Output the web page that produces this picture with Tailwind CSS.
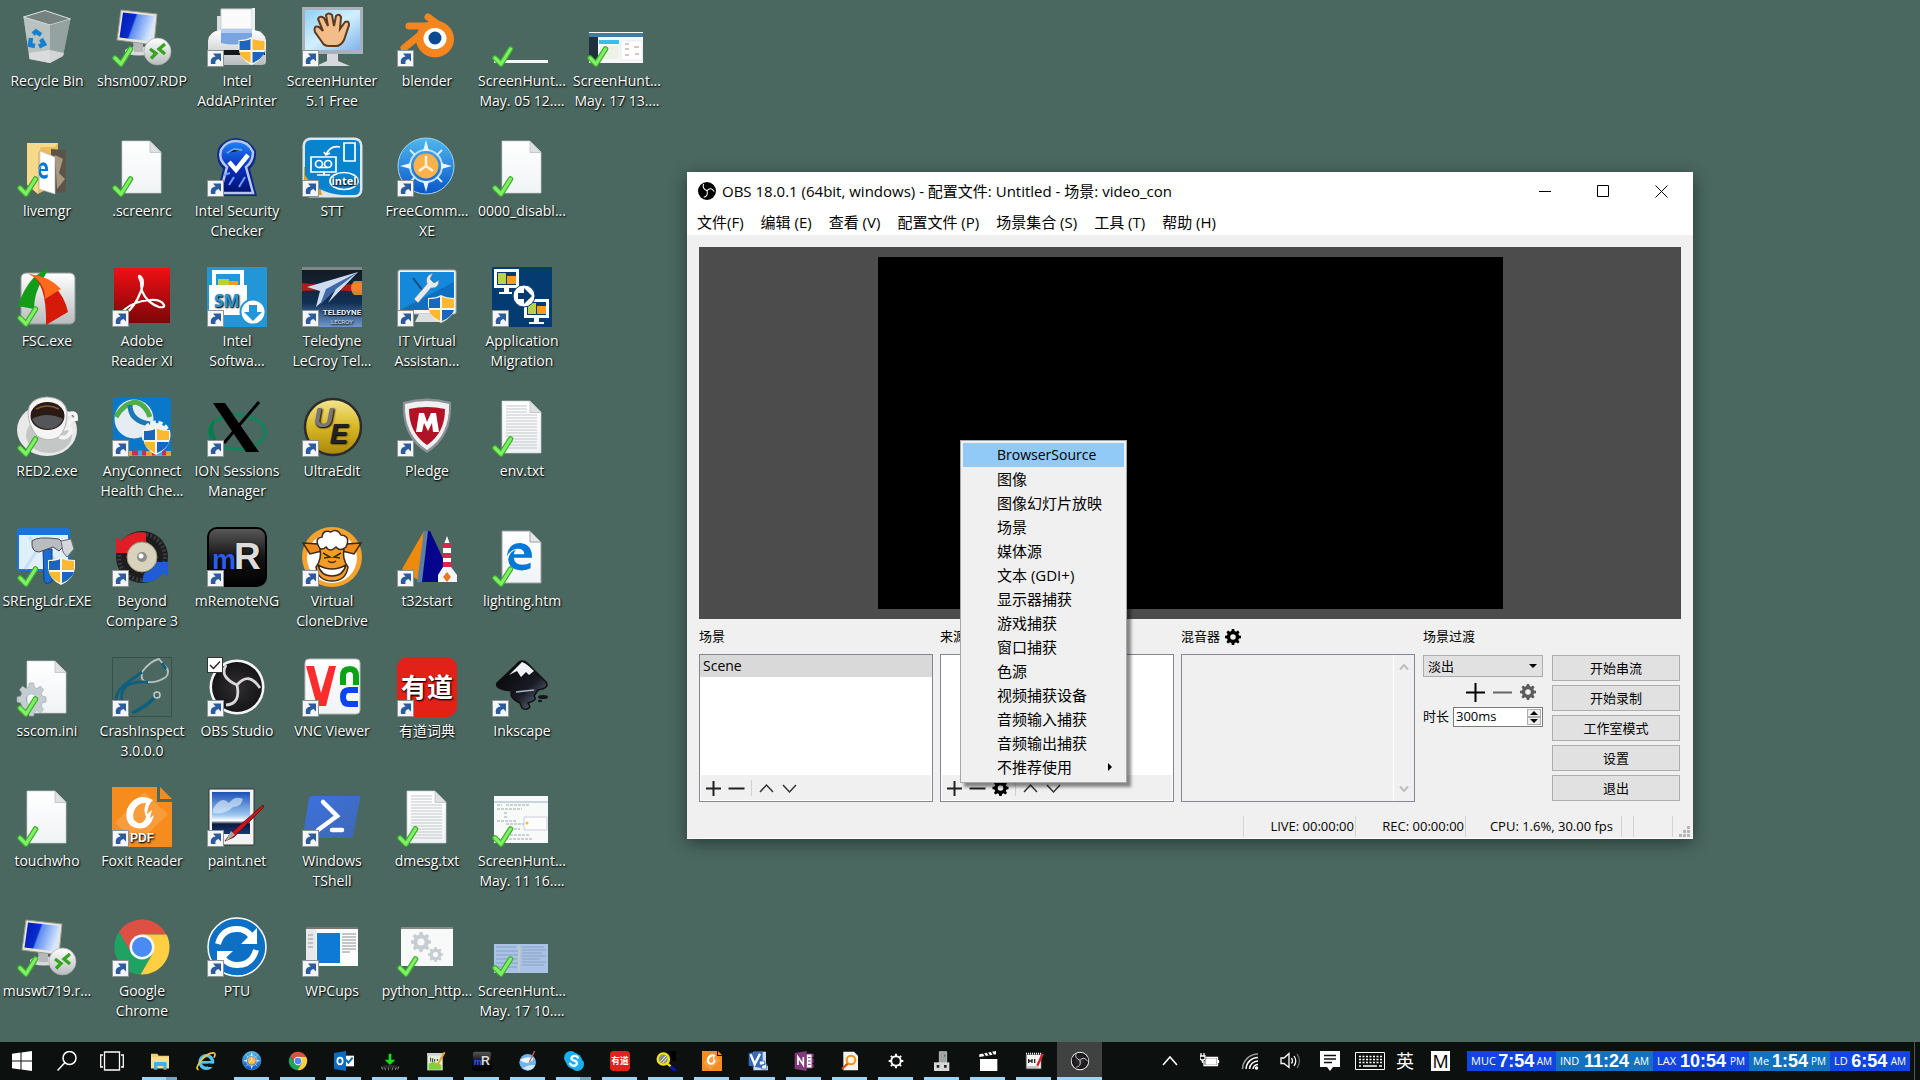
<!DOCTYPE html>
<html lang="zh-CN">
<head>
<meta charset="utf-8">
<title>Desktop</title>
<script src="https://cdn.jsdelivr.net/npm/@tailwindcss/browser@4"></script>
</head>
<body class="font-['Open_Sans','Noto_Sans_CJK_SC',sans-serif]">
<svg class="absolute w-0 h-0" aria-hidden="true">
  <defs>
    <linearGradient id="gScreen" x1="0" y1="0" x2="1" y2="0.3"><stop offset="0" stop-color="#0018b8"/><stop offset=".45" stop-color="#0a2ccc"/><stop offset=".5" stop-color="#5b8cf0"/><stop offset="1" stop-color="#d6e6ff"/></linearGradient>
    <linearGradient id="gPaper" x1="0" y1="0" x2="0" y2="1"><stop offset="0" stop-color="#ffffff"/><stop offset="1" stop-color="#f0f3f5"/></linearGradient>
    <linearGradient id="gGrey" x1="0" y1="0" x2="0" y2="1"><stop offset="0" stop-color="#ffffff"/><stop offset="1" stop-color="#b9bcbc"/></linearGradient>
    <linearGradient id="gRed" x1="0" y1="0" x2="0" y2="1"><stop offset="0" stop-color="#f01015"/><stop offset="1" stop-color="#7c0508"/></linearGradient>
    <linearGradient id="gBlue" x1="0" y1="0" x2="0" y2="1"><stop offset="0" stop-color="#4fb8ee"/><stop offset="1" stop-color="#0a55c8"/></linearGradient>
    <linearGradient id="gNavy" x1="0" y1="0" x2="0" y2="1"><stop offset="0" stop-color="#1d86f2"/><stop offset=".5" stop-color="#0a2fc0"/><stop offset="1" stop-color="#00106e"/></linearGradient>
    <linearGradient id="gBlack" x1="0" y1="0" x2="0" y2="1"><stop offset="0" stop-color="#5a5a5a"/><stop offset=".5" stop-color="#151515"/><stop offset="1" stop-color="#000"/></linearGradient>
    <linearGradient id="gGold" x1="0" y1="0" x2="0" y2="1"><stop offset="0" stop-color="#f4e690"/><stop offset=".5" stop-color="#d8b824"/><stop offset="1" stop-color="#a8860a"/></linearGradient>
    <linearGradient id="gSky" x1="0" y1="0" x2="0" y2="1"><stop offset="0" stop-color="#1c50b8"/><stop offset=".55" stop-color="#9cc8f0"/><stop offset=".68" stop-color="#ffffff"/><stop offset=".76" stop-color="#0a1a3c"/><stop offset="1" stop-color="#123a80"/></linearGradient>
    <linearGradient id="gScreen2" x1="0" y1="0" x2="1" y2="1"><stop offset="0" stop-color="#8fd0f4"/><stop offset=".5" stop-color="#d2f0fc"/><stop offset="1" stop-color="#7fb4ec"/></linearGradient>
    <linearGradient id="gSpace" x1="0" y1="0" x2="0" y2="1"><stop offset="0" stop-color="#14181c"/><stop offset=".6" stop-color="#123055"/><stop offset="1" stop-color="#6f98cc"/></linearGradient>
    <linearGradient id="gPs" x1="0" y1="0" x2="1" y2="1"><stop offset="0" stop-color="#3c72e0"/><stop offset="1" stop-color="#3f68b4"/></linearGradient>
    <linearGradient id="gInk" x1="0" y1="0" x2="1" y2="1"><stop offset="0" stop-color="#000"/><stop offset=".6" stop-color="#1a1c26"/><stop offset="1" stop-color="#7c88a4"/></linearGradient>
    <radialGradient id="gObs"><stop offset="0" stop-color="#302e31"/><stop offset="1" stop-color="#151416"/></radialGradient>
    <g id="shield"><path d="M0 3Q8 3 13 0Q18 3 27 3V11Q26 22 13 28Q1 22 0 11Z" fill="#f8f4e8"/><path d="M1 4Q8 4 12 2V13H1Z" fill="#1a66be"/><path d="M14 2Q19 4 26 4V13H14Z" fill="#fdb831"/><path d="M1 15H12V26Q2 21 1 15Z" fill="#fdb831"/><path d="M14 15H26Q24 22 14 26Z" fill="#1a66be"/></g>
    <g id="shortcut"><rect x=".5" y="43.500" width="16" height="16" fill="#f5f6f7" stroke="#8d9294"/><path d="M4 57Q2.500 50 8.500 49.500L6 46.500H14V54.500L11.500 52Q7.500 53 8.500 57Z" fill="#2c5c9e"/></g>
    <g id="tick"><path d="M3 51L9 57L18.500 42" fill="none" stroke="#3fae2c" stroke-width="5.500" stroke-linecap="round" stroke-linejoin="round"/><path d="M3 51L9 57L18.500 42" fill="none" stroke="#7ef066" stroke-width="3.200" stroke-linecap="round" stroke-linejoin="round"/></g>
    <path id="gear" fill-rule="evenodd" d="M8.500 0h3l.5 2.600 1.800.8 2.300-1.500 2.100 2.100-1.500 2.300.8 1.700 2.500.5v3l-2.500.5-.8 1.800 1.500 2.300-2.100 2.100-2.300-1.500-1.800.8-.5 2.500h-3l-.5-2.500-1.800-.8-2.300 1.500-2.100-2.100 1.500-2.300-.8-1.800L0 11.500v-3l2.500-.5.800-1.700-1.500-2.300 2.100-2.100 2.300 1.500 1.800-.8zM10 6.500a3.500 3.500 0 1 0 0 7a3.500 3.500 0 1 0 0-7z"/>
  </defs>
</svg>

<div class="flex flex-col h-screen min-h-[1080px] bg-[#4a6860] overflow-hidden">
  <main class="relative grow">
    <ul id="icons" class="grid grid-flow-col grid-rows-[repeat(8,130px)] auto-cols-[95px] w-max"></ul>

    <!-- OBS window, placed freely on the desktop -->
    <section class="absolute left-[687px] top-[172px] w-[1006px] flex flex-col bg-[#f0f0f0] text-black shadow-[0_4px_16px_rgba(0,0,0,.45)] border-b border-white">
      <header class="flex items-center h-[38px] pl-[11px] pr-[3px] bg-white text-[15px]">
        <svg class="size-[18px] mr-1.5" viewBox="0 0 60 60"><circle cx="30" cy="30" r="30" fill="#000"/><g fill="none" stroke="#fff" stroke-width="3.500"><path d="M30 29Q12 20 19 7M30 29Q44 14 54 32M30 29Q35 49 19 51"/></g></svg>
        <h1 class="grow whitespace-nowrap">OBS 18.0.1 (64bit, windows) - 配置文件: Untitled - 场景: video_con</h1>
        <button aria-label="Minimize" class="grid place-items-center w-[58px] h-full"><svg class="size-3" viewBox="0 0 12 12"><path d="M0 6.500H12" stroke="#000"/></svg></button>
        <button aria-label="Maximize" class="grid place-items-center w-[58px] h-full"><svg class="size-3" viewBox="0 0 12 12"><path d="M.5.500H11.500V11.500H.5Z" stroke="#000" fill="none"/></svg></button>
        <button aria-label="Close" class="grid place-items-center w-[58px] h-full"><svg class="size-[13px]" viewBox="0 0 13 13"><path d="M.5.500L12.500 12.500M12.500.500L.5 12.500" stroke="#000"/></svg></button>
      </header>
      <nav class="flex items-center gap-[17px] h-[25px] pl-2.5 bg-white text-[15px] whitespace-nowrap">
        <button>文件(F)</button><button>编辑 (E)</button><button>查看 (V)</button><button>配置文件 (P)</button><button>场景集合 (S)</button><button>工具 (T)</button><button>帮助 (H)</button>
      </nav>
      <div class="px-3 pt-3">
        <div class="flex justify-center pt-2.5 h-[372px] bg-[#4c4c4c]"><div class="w-[625px] h-[352px] bg-black"></div></div>
      </div>
      <div class="flex h-[183px] pl-3 pr-[13px] text-[13px]">
        <section class="w-[234px] mr-[7px]">
          <h2 class="flex items-center h-[35px]">场景</h2>
          <div class="flex flex-col h-[148px] border border-[#828790] bg-white">
            <div class="flex items-center h-[22px] pl-[3px] bg-[#d9d9d9] text-sm">Scene</div>
            <div class="grow"></div>
            <div class="flex items-center gap-1 h-[25px] mx-px mb-px pl-[3px] bg-[#f0f0f0]">
              <button aria-label="Add scene"><svg class="w-[19px] h-4" viewBox="0 0 19 16"><path d="M2 8.500H17M9.500 1V16" stroke="#222" stroke-width="2"/></svg></button>
              <button aria-label="Remove scene"><svg class="w-[19px] h-4" viewBox="0 0 19 16"><path d="M1.500 8.500H17.500" stroke="#222" stroke-width="2"/></svg></button>
              <span class="w-px h-4 mx-px bg-[#cfcfcf]"></span>
              <button aria-label="Move up"><svg class="w-[19px] h-4" viewBox="0 0 19 16"><path d="M3 12L9.500 5L16 12" fill="none" stroke="#333" stroke-width="1.500"/></svg></button>
              <button aria-label="Move down"><svg class="w-[19px] h-4" viewBox="0 0 19 16"><path d="M3 5L9.500 12L16 5" fill="none" stroke="#333" stroke-width="1.500"/></svg></button>
            </div>
          </div>
        </section>
        <section class="w-[234px] mr-[7px]">
          <h2 class="flex items-center h-[35px]">来源</h2>
          <div class="flex flex-col h-[148px] border border-[#828790] bg-white">
            <div class="grow"></div>
            <div class="flex items-center gap-1 h-[25px] mx-px mb-px pl-[3px] bg-[#f0f0f0]">
              <button aria-label="Add source"><svg class="w-[19px] h-4" viewBox="0 0 19 16"><path d="M2 8.500H17M9.500 1V16" stroke="#222" stroke-width="2"/></svg></button>
              <button aria-label="Remove source"><svg class="w-[19px] h-4" viewBox="0 0 19 16"><path d="M1.500 8.500H17.500" stroke="#222" stroke-width="2"/></svg></button>
              <button aria-label="Source properties"><svg class="w-[19px] h-4" viewBox="0 0 20 20"><use href="#gear"/></svg></button>
              <span class="w-px h-4 mx-px bg-[#cfcfcf]"></span>
              <button aria-label="Move up"><svg class="w-[19px] h-4" viewBox="0 0 19 16"><path d="M3 12L9.500 5L16 12" fill="none" stroke="#333" stroke-width="1.500"/></svg></button>
              <button aria-label="Move down"><svg class="w-[19px] h-4" viewBox="0 0 19 16"><path d="M3 5L9.500 12L16 5" fill="none" stroke="#333" stroke-width="1.500"/></svg></button>
            </div>
          </div>
        </section>
        <section class="w-[234px] mr-2">
          <h2 class="flex items-center gap-[5px] h-[35px]">混音器 <svg class="size-4" viewBox="0 0 20 20"><use href="#gear"/></svg></h2>
          <div class="flex justify-end h-[148px] border border-[#828790]">
            <div class="flex flex-col items-center justify-between w-[21px] py-2 border-l border-white">
              <svg class="w-2.5 h-2" viewBox="0 0 10 8"><path d="M1 6.500L5 2L9 6.500" fill="none" stroke="#bfbfbf" stroke-width="2"/></svg>
              <svg class="w-2.5 h-2" viewBox="0 0 10 8"><path d="M1 1.500L5 6L9 1.500" fill="none" stroke="#bfbfbf" stroke-width="2"/></svg>
            </div>
          </div>
        </section>
        <section class="w-[120px] mr-[9px]">
          <h2 class="flex items-center h-[36px]">场景过渡</h2>
          <div class="relative h-[22px]">
            <select aria-label="场景过渡" class="appearance-none block w-full h-full pl-1 border border-[#adadad] bg-[#e1e1e1] leading-none"><option>淡出</option></select>
            <svg class="absolute right-1.5 top-[9px] w-2 h-1" viewBox="0 0 8 4"><path d="M0 0H8L4 4Z"/></svg>
          </div>
          <div class="flex items-center justify-end gap-2 h-[30px] pr-[7px]">
            <button aria-label="Add transition"><svg class="size-[19px]" viewBox="0 0 19 19"><path d="M0 9.500H19M9.500 0V19" stroke="#000" stroke-width="2"/></svg></button>
            <button aria-label="Remove transition"><svg class="size-[19px]" viewBox="0 0 19 19"><path d="M0 9.500H19" stroke="#666" stroke-width="2"/></svg></button>
            <button aria-label="Transition properties"><svg class="size-4" viewBox="0 0 20 20" fill="#5c5c5c"><use href="#gear"/></svg></button>
          </div>
          <div class="flex items-center h-5">
            <label for="dur" class="w-[30px]">时长</label>
            <div class="flex w-[90px] h-5 border border-[#7a7a7a] bg-white p-px">
              <input id="dur" value="300ms" class="w-0 grow pl-px outline-none">
              <div class="flex flex-col w-3.5">
                <button aria-label="Increase" class="grid place-items-center h-2 border border-[#adadad] bg-[#eee]"><svg class="w-2 h-1" viewBox="0 0 8 4"><path d="M0 4H8L4 0Z"/></svg></button>
                <button aria-label="Decrease" class="grid place-items-center h-2 border border-[#adadad] bg-[#eee]"><svg class="w-2 h-1" viewBox="0 0 8 4"><path d="M0 0H8L4 4Z"/></svg></button>
              </div>
            </div>
          </div>
        </section>
        <div class="flex flex-col gap-1 grow pt-9">
          <button class="h-[26px] border border-[#adadad] bg-[#e1e1e1] leading-none">开始串流</button>
          <button class="h-[26px] border border-[#adadad] bg-[#e1e1e1] leading-none">开始录制</button>
          <button class="h-[26px] border border-[#adadad] bg-[#e1e1e1] leading-none">工作室模式</button>
          <button class="h-[26px] border border-[#adadad] bg-[#e1e1e1] leading-none">设置</button>
          <button class="h-[26px] border border-[#adadad] bg-[#e1e1e1] leading-none">退出</button>
        </div>
      </div>
      <footer class="flex justify-end items-end h-9 pr-[3px] pb-px text-[13px] whitespace-nowrap">
        <div class="flex justify-end items-center w-[113px] h-[21px] border-x border-[#d4d4d4] pr-px">LIVE: 00:00:00</div>
        <div class="flex justify-end items-center w-[110px] h-[21px] border-r border-[#d4d4d4] pr-px">REC: 00:00:00</div>
        <div class="flex justify-end items-center w-[156px] h-[21px] border-r border-[#d4d4d4] pr-2">CPU: 1.6%, 30.00 fps</div>
        <div class="w-3 h-[21px] border-r border-[#d4d4d4]"></div>
        <div class="w-[39px] h-[21px] border-r border-[#d4d4d4] mr-1.5"></div>
        <svg class="size-[11px]" viewBox="0 0 11 11" fill="#b5b5b5"><path d="M8 0h3v3h-3zM4 4h3v3h-3zM8 4h3v3h-3zM0 8h3v3h-3zM4 8h3v3h-3zM8 8h3v3h-3z"/></svg>
      </footer>
    </section>

    <!-- Add-source menu -->
    <menu class="absolute left-[960px] top-[440px] w-[167px] px-0.5 pt-0.5 pb-[3px] bg-[#f0f0f0] border border-[#a8a8a8] shadow-[4px_4px_3px_rgba(0,0,0,.45)] text-[15px] leading-[22px] text-black [&_button]:block [&_button]:w-full [&_button]:h-6 [&_button]:pl-[34px] [&_button]:text-left whitespace-nowrap">
      <li><button class="bg-[#91c9f7] text-sm">BrowserSource</button></li>
      <li><button>图像</button></li>
      <li><button>图像幻灯片放映</button></li>
      <li><button>场景</button></li>
      <li><button>媒体源</button></li>
      <li><button>文本 (GDI+)</button></li>
      <li><button>显示器捕获</button></li>
      <li><button>游戏捕获</button></li>
      <li><button>窗口捕获</button></li>
      <li><button>色源</button></li>
      <li><button>视频捕获设备</button></li>
      <li><button>音频输入捕获</button></li>
      <li><button>音频输出捕获</button></li>
      <li class="relative"><button>不推荐使用</button><svg class="absolute right-3 top-2 w-1 h-2" viewBox="0 0 4 8"><path d="M0 0L4 4L0 8Z"/></svg></li>
    </menu>
  </main>

  <footer class="flex items-stretch h-[38px] bg-[#0c100f] text-white">
    <button aria-label="Start" class="grid place-items-center w-11"><svg class="size-5" viewBox="0 0 20 20" fill="#fff"><path d="M0 2.800L8.500 1.600V9.500H0ZM9.500 1.400L20 0V9.500H9.500ZM0 10.500H8.500V18.400L0 17.200ZM9.500 10.500H20V20L9.500 18.600Z"/></svg></button>
    <button aria-label="Search" class="grid place-items-center w-[45px]"><svg class="size-5" viewBox="0 0 20 20" fill="none" stroke="#fff" stroke-width="1.500"><circle cx="12.500" cy="7" r="6.500"/><path d="M8 11.500L0.500 19.500"/></svg></button>
    <button aria-label="Task view" class="grid place-items-center w-[45px] mr-[3px]"><svg class="w-6 h-5" viewBox="0 0 24 20" fill="none" stroke="#fff" stroke-width="1.300"><path d="M4.500 1H19.500V19H4.500ZM3 4H.7V16H3M21 4H23.300V16H21"/></svg></button>
    <div id="tasks" class="flex gap-px grow"></div>
    <div class="flex items-center">
      <button aria-label="Hidden icons" class="grid place-items-center w-10 h-full"><svg class="w-4 h-5" viewBox="0 0 16 20"><path d="M1 14L8 6L15 14" fill="none" stroke="#fff" stroke-width="1.500"/></svg></button>
      <button aria-label="Power" class="grid place-items-center w-10 h-full"><svg class="w-5 h-5" viewBox="0 0 20 20" fill="none" stroke="#fff" stroke-width="1.300"><path d="M6 6.500H17.500V14.500H4V10M18.500 9V12"/><path d="M7 8H16V13H6V9Z" fill="#fff"/><path d="M1 2V5M4 2V5M0 5H5V8L3.500 9H1.500L0 8ZM2.500 9V12"/></svg></button>
      <button aria-label="Network" class="grid place-items-center w-10 h-full"><svg class="w-5 h-5" viewBox="0 0 20 20" fill="none" stroke="#fff" stroke-width="1.500"><path d="M2.500 18A15.500 15.500 0 0 1 18 3" stroke="#999"/><path d="M6 18A12 12 0 0 1 18 6.500M9.500 18A8.500 8.500 0 0 1 18 10M13 18A5 5 0 0 1 18 13.500"/><circle cx="16.500" cy="17" r="1" fill="#fff"/></svg></button>
      <button aria-label="Volume" class="grid place-items-center w-10 h-full"><svg class="w-[22px] h-5" viewBox="0 0 22 20" fill="none" stroke="#fff" stroke-width="1.300"><path d="M2 7H5L10 2.500V16.500L5 12.500H2Z"/><path d="M12.500 7Q14.500 10 12.500 12.500M15 5Q18.500 10 15 15"/><path d="M18 3Q23 10 18 17" stroke="#666"/></svg></button>
      <button aria-label="Notifications" class="grid place-items-center w-10 h-full"><svg class="w-5 h-5" viewBox="0 0 20 20"><path d="M0 0H20V16H13L10 20L7 16H0Z" fill="#fff"/><path d="M4 4.500H16M4 8H16M4 11.500H12" stroke="#0c100f" stroke-width="1.300"/></svg></button>
      <button aria-label="Touch keyboard" class="grid place-items-center w-10 h-full"><svg class="w-[30px] h-[18px]" viewBox="0 0 30 18" fill="none" stroke="#fff"><path d="M.5.500H29.500V17.500H.5Z"/><path d="M4 4.500H27M4 7.500H27M4 10.500H27" stroke-dasharray="2 1.500" stroke-width="1.500"/><path d="M4 14H6M8 14H22M24 14H27" stroke-width="1.500"/></svg></button>
      <button class="w-[30px] text-lg leading-none text-center">英</button>
      <button aria-label="Input mode" class="grid place-items-center w-[19px] h-5 ml-[11px] mr-[17px] bg-white text-black text-lg leading-none"><span>M</span></button>
      <div id="clocks" class="flex h-5 mr-1 leading-5 whitespace-nowrap"></div>
      <button aria-label="Show desktop" class="w-1.5 h-full border-l border-[#555]"></button>
    </div>
  </footer>
</div>

<script>
const paper = '<path d="M10 4H38L49 15V56H10Z" fill="url(#gPaper)" stroke="#c9cdcf" stroke-width=".7"/><path d="M38 4V15.500H49Z" fill="#dfe1e2" stroke="#b4b8ba" stroke-width=".7"/>';
const lines = '<path d="M14 9H35M14 12H35M14 15H35M14 18H45M14 21H45M14 24H45M14 27H45M14 30H45M14 33H45M14 36H45M14 39H45M14 42H45M14 45H45M14 48H45M14 51H45" stroke="#c3c7c9"/>';
const edge = '<path d="M4 22Q6 3 23 3Q40 4 40 24H14Q15 34 26 34Q33 34 38 31V39Q33 42 25 42Q7 41 6 26Q8 15 17 12Q14 16 14 19H29Q29 11 20 11Q10 11 4 22Z" fill="#0078d7"/>';
const shieldAt = (x, y) => `<use href="#shield" x="${x}" y="${y}"/>`;

const art = {
  bin: '<path d="M6.500 10L28 3.500L53.500 12L46 49L33 56L12.500 52Z" fill="#a9b4b3" opacity=".85"/><path d="M6.500 10L28 3.500L53.500 12L33 18Z" fill="#75827f" stroke="#dfe4e4"/><path d="M6.500 10L33 18V56L12.500 52Z" fill="#c3cccb" opacity=".75"/><path d="M33 18L53.500 12L46 49L33 56Z" fill="#94a19f" opacity=".8"/><path d="M12 46L33 43L47 46L46 49L33 56L12.500 52Z" fill="#e4e0e4" opacity=".8"/><g fill="none" stroke="#1580cf" stroke-width="4.500"><path d="M16 27L19 24.500L24 28"/><path d="M14 31L13 38L18 39"/><path d="M22 39.500L27 37L24 32"/></g>',
  rdp: '<ellipse cx="27" cy="44" rx="14" ry="4.500" fill="#d9dadb"/><path d="M21 34L31 35V45H22Z" fill="#b6b8ba"/><path d="M9 3L45 7L42 38L5 33Z" fill="#e8e6da" stroke="#9a9a94"/><path d="M11 5.500L42.500 9L39.500 34.500L7.500 30.500Z" fill="url(#gScreen)"/><circle cx="45.500" cy="44.500" r="13.500" fill="url(#gGrey)" stroke="#aaa" stroke-width=".7"/><path d="M38 42L44 46.500L39 51.500M53 37L47 42L53 47" fill="none" stroke="#36a51e" stroke-width="3.300"/>',
  printer: '<path d="M10 9H48V26H10Z" fill="#d9dde0"/><path d="M14 2H45V22H14Z" fill="#fafafa" stroke="#cfd2d4"/><path d="M45 1H48V26H45Z" fill="#eceff0"/><path d="M1 34Q2 24 14 23H46Q58 24 59 34V55Q59 58 54 58H8Q1 58 1 54Z" fill="url(#gGrey)"/><path d="M14 22H45V34Q30 40 14 36Z" fill="#78a5e2"/><path d="M14 22H45V26H14Z" fill="#b4cdf2"/><path d="M2 43H58V48H2Z" fill="#15181a"/>' + shieldAt(31.5, 30),
  hunter: '<path d="M0 0H61V47H0Z" fill="#a9b1bb"/><path d="M3 3H58V43H3Z" fill="url(#gScreen2)"/><path d="M25 47H36V54L48 59H14L25 54Z" fill="#d5d8dc"/><path d="M20 35L13 25Q11 18 17 20L21 24L16 12Q18 8 22 11L26 19L24 8Q27 5 30 8L32 19L34 9Q37 6 39 10L38 22L43 15Q47 13 47 18L42 33Q39 39 34 39H27Q22 39 20 35Z" fill="#f3bd8a" stroke="#5a3a20" stroke-width="2"/>',
  blender: '<g stroke="#f5861f" stroke-width="7" stroke-linecap="round" fill="none"><path d="M31 10L50 24M12 19H36M7 41L28 24"/></g><ellipse cx="38" cy="32" rx="19" ry="18.500" fill="#f5861f"/><ellipse cx="38" cy="31.500" rx="11.500" ry="10.500" fill="#fff"/><circle cx="38" cy="31" r="6.500" fill="#0c4a94"/>',
  thin: '<path d="M2 53H56V56H2Z" fill="#f4f5f5"/>',
  shot1: '<path d="M2 25H56V56H2Z" fill="#f6f8fa"/><path d="M2 26H56V30H2Z" fill="#3d7ea6"/><path d="M2 30H11V54H2Z" fill="#20303c"/><path d="M12 33H32V37H12Z" fill="#35bfee"/><path d="M13 39H32V52H13Z" fill="#eef2e6"/><path d="M34 34H55V53H34Z" fill="#fff" stroke="#dde" stroke-width=".6"/><path d="M38 37H42M38 42H42M47 40H52M38 48H42M48 47H52" stroke="#b88"/>',
  folder: '<path d="M10 6H41V14L38 48L21 57L10 48Z" fill="#e9bd5c"/><path d="M34 12L49 13V55L34 56Z" fill="#5c5448"/><path d="M38 18L46 22L42 36L48 42L40 52Z" fill="#a89880"/><path d="M23 14L38 20V57L22 52Z" fill="#fff" stroke="#bbb" stroke-width=".7"/><g transform="translate(20 24) scale(.28 .42)">' + edge + '</g><path d="M10 6L41 6L38 10H24L21 17V57L10 47Z" fill="#f7d98b"/>',
  page: paper,
  text: paper + lines,
  keyhole: '<path d="M29 1Q43 2 49 14Q50 25 43 32L50 59H9L16 32Q8 24 11 12Q16 2 29 1Z" fill="#0a2a8c"/><path d="M29 4Q41 4 46 15Q46 25 39 30L46 56H13L20 30Q11 23 14 13Q19 4 29 4Z" fill="url(#gNavy)" stroke="#b9c5e8" stroke-width="2.500"/><path d="M20 16L27 12L35 13M17 38L23 36M22 48L27 40M32 50L38 40" stroke="#6aa0ff" stroke-width="2"/><path d="M22 25L29 33L41 18" stroke="#fff" stroke-width="4.500" fill="none"/>',
  stt: '<rect x=".5" y=".5" width="60" height="60" rx="8" fill="#dfe6ea"/><path d="M2 30H14L20 58H2Z" fill="#e0a020"/><path d="M3 9Q3 3 9 3H52Q58 3 58 9V52Q58 58 52 58H40Q14 56 3 38Z" fill="#0a83cf"/><g fill="none" stroke="#fff" stroke-width="1.700"><path d="M9 20H34V35H9ZM15 38H28M22 35V38"/><circle cx="17" cy="27" r="3.500"/><circle cx="26" cy="27" r="3.500"/><path d="M17 30.500H26M24 18Q28 8 38 10M22 15L24 18L28 16"/><path d="M42 6H53V24H42Z"/><ellipse cx="42" cy="44" rx="14" ry="8.500"/></g><text x="42" y="48" text-anchor="middle" font-size="11" font-weight="bold" fill="#fff" font-family="Open Sans">intel</text>',
  compass: '<circle cx="29" cy="29" r="28" fill="url(#gBlue)" stroke="#9fd4f4"/><circle cx="29" cy="29" r="16" fill="none" stroke="#b9e0f6" stroke-width="2"/><path d="M29 3L32 14H26ZM29 55L32 44H26ZM3 29L14 26V32ZM55 29L44 26V32Z" fill="#e6f5fd"/><path d="M13 13L18 18M45 13L40 18M13 45L18 40M45 45L40 40" stroke="#d4edfa" stroke-width="2"/><circle cx="29" cy="29" r="12.500" fill="#fcb14a"/><path d="M29 19V29L22 34M29 29L36 34" stroke="#fff3dc" stroke-width="2.500" fill="none"/>',
  fsc: '<rect x="4" y="6" width="54" height="51" rx="5" fill="url(#gGrey)" stroke="#909896"/><path d="M32 1L18 9Q6 22 1 39L17 42Q17 26 26 12Z" fill="#139c17"/><path d="M12 7Q30 14 29 58L51 45Q44 14 12 7Z" fill="#d61a0a"/><path d="M12 7Q28 15 28 32L44 22Q32 9 12 7Z" fill="#ff6a1c"/>',
  adobe: '<path d="M2 1H58V56H2Z" fill="url(#gRed)"/><path d="M29 15Q25 6 29 10Q33 14 29 24Q23 40 14 46Q7 49 12 43Q22 34 38 33Q49 32 52 38Q53 41 47 40Q35 36 30 24Q29 19 29 15" fill="none" stroke="#fff" stroke-width="2.200"/>',
  sm: '<path d="M0 0H60V60H0Z" fill="#2296d6"/><path d="M5 3H37V20H33V7H9V20H5Z" fill="#fff"/><path d="M11 12H22V19H11Z" fill="#b8cf45"/><path d="M22 14H31V19H22Z" fill="#f59c1a"/><path d="M2 18H40V48H2Z" fill="#fff"/><text x="20" y="40" text-anchor="middle" font-size="17" font-weight="bold" fill="#2296d6" font-family="Open Sans">SM</text><circle cx="46" cy="45" r="12.500" fill="#fff" stroke="#2296d6" stroke-width="2"/><path d="M42 38H50V45H55L46 54L37 45H42Z" fill="#2296d6"/>',
  teledyne: '<path d="M0 0H60V60H0Z" fill="url(#gSpace)"/><path d="M0 0H60V3H0Z" fill="#80888c"/><path d="M0 16Q30 20 60 16V25Q30 22 0 24Z" fill="#c22014" opacity=".85"/><path d="M52 14H60V28H52Q46 21 52 14Z" fill="#ff9c30" opacity=".8"/><path d="M56 5L5 20L18 24L14 40L34 22L26 36Z" fill="#cfdcf0"/><path d="M56 5L24 22L18 38L34 22Z" fill="#3f68a8"/><text x="40" y="48" text-anchor="middle" font-size="8" font-weight="bold" fill="#e8edf4" font-family="Roboto">TELEDYNE</text><text x="40" y="57" text-anchor="middle" font-size="6" fill="#d9e4f0" font-family="Roboto">LECROY</text>',
  itva: '<rect x="1" y="3" width="58" height="44" rx="2" fill="#f4f6f7" stroke="#aab"/><path d="M3 5H57V43H3Z" fill="#1489dc"/><path d="M3 43L57 15V43Z" fill="#0c6fc0"/><path d="M22 47H40L43 55H18Z" fill="#dcdfdf"/><path d="M16 11L26 24" stroke="#174a78" stroke-width="2"/><path d="M17 32L30 17Q27 9 36 6L33 12L37 16L42 13Q42 22 34 21L21 36Z" fill="#e5ebf0" stroke="#5d7a92" stroke-width=".7"/>' + shieldAt(31, 28),
  appmig: '<path d="M0 0H60V60H0Z" fill="#043c72"/><g><path d="M2 2H27V21H17V25H20V27H7V25H12V21H2Z" fill="#fff"/><path d="M5 5H24V18H5Z" fill="#043c72"/><path d="M6 6H14V17H6Z" fill="#b8d24a"/><path d="M15 9H24V17H15Z" fill="#f79f1c"/></g><g><path d="M32 32H57V51H47V55H52V57H37V55H42V51H32Z" fill="#fff"/><path d="M35 35H54V48H35Z" fill="#043c72"/><path d="M36 36H44V47H36Z" fill="#b8d24a"/><path d="M45 39H54V47H45Z" fill="#f79f1c"/></g><circle cx="32" cy="29" r="11" fill="#fff" stroke="#043c72"/><path d="M26 26H32V21L40 29L32 37V32H26Z" fill="#043c72"/>',
  coffee: '<ellipse cx="30" cy="33" rx="30" ry="26" fill="#e8e9e8"/><ellipse cx="32" cy="38" rx="23" ry="18" fill="#c5c7c6"/><path d="M46 19Q60 12 59 22Q52 22 51 29M44 33Q56 28 53 36Q48 44 40 38" fill="none" stroke="#f4f4f4" stroke-width="4"/><path d="M11 15Q12 1 30 0Q48 1 50 15Q50 32 42 40Q30 46 20 39Q11 28 11 15Z" fill="#f5f5f5" stroke="#b5b5b5"/><ellipse cx="30.500" cy="19" rx="17" ry="14" fill="#2a1a14"/><path d="M15 22Q30 14 46 22Q42 32 30 32Q19 31 15 22Z" fill="#55565a"/><path d="M19 12Q30 6 42 12" stroke="#8a5830" stroke-width="1.500" fill="none"/>',
  anyconnect: '<rect x="1" y="1" width="58" height="58" rx="2" fill="#0a78c8"/><path d="M17 54H59V59H17Z" fill="#f0a020"/><path d="M20 56H26M30 56H34M40 56H44M50 56H54" stroke="#d02a5a" stroke-width="5"/><path d="M26 56H30M44 56H50" stroke="#30b0e0" stroke-width="5"/><circle cx="22" cy="22" r="19.500" fill="#e6edf2"/><path d="M4 20Q12 6 24 5Q34 8 38 20" fill="none" stroke="#4fae4a" stroke-width="5"/><path d="M18 8Q18 24 38 27" fill="none" stroke="#1c78b4" stroke-width="5"/><circle cx="44" cy="38" r="12" fill="#eef3f6" stroke="#eef3f6" stroke-width="5" stroke-dasharray="4 2.500"/>' + shieldAt(31, 30),
  xming: '<ellipse cx="30" cy="35" rx="28" ry="17" fill="none" stroke="#10845a" stroke-width="3"/><path d="M4 42Q-2 30 8 22Q4 32 10 44Z" fill="#0c7a50"/><path d="M6 6H18L52 55H39Z"/><path d="M52 5L17 46" stroke="#000" stroke-width="3"/>',
  ultraedit: '<circle cx="31" cy="30" r="28" fill="url(#gGold)" stroke="#2c2c2c" stroke-width="2.500"/><text x="12" y="30" font-size="27" font-weight="bold" font-style="italic" fill="#77787c" font-family="Liberation Sans">U</text><text x="28" y="46" font-size="27" font-weight="bold" font-style="italic" fill="#222" font-family="Liberation Sans">E</text>',
  mcafee: '<path d="M6 5Q30 -2 54 5Q56 40 30 56Q4 40 6 5Z" fill="#8d9296"/><path d="M8 7Q30 1 52 7Q53 38 30 53Q7 38 8 7Z" fill="#eef0f1"/><path d="M12 12Q30 8 48 12Q48 36 30 48Q12 36 12 12Z" fill="#b01226"/><path d="M19 35L22 16H27L30 25L34 16H39L42 35H36L35 26L31 34L27 26L25 35Z" fill="#fff"/>',
  sreng: '<rect x="0" y="1" width="53" height="43" rx="3" fill="#1674dc"/><path d="M2 8H51V42H2Z" fill="#dff0fa"/><path d="M8 42L22 20L12 10M22 20L40 34" stroke="#c5dff0" stroke-width="3" fill="none"/><path d="M26 22H35V54Q30 59 27 54Z" fill="#1c6cd0" stroke="#0b3f86"/><path d="M15 14Q20 9 42 12L48 18L42 24L36 20L22 25Q14 25 15 14Z" fill="#b9bcc0" stroke="#4a4c50"/><path d="M44 14L54 12L57 22L50 30L46 25Z" fill="#d4d6d9" stroke="#6a6c70"/>' + shieldAt(31, 30),
  beyond: '<circle cx="30" cy="30" r="26" fill="#1d1d1d"/><circle cx="30" cy="30" r="23" fill="none" stroke="#3c3c3c" stroke-width="4" stroke-dasharray="2 2"/><path d="M4 26V10L9 14Q20 3 34 6V15Q24 15 18 22L20 26Z" fill="#e01e26"/><path d="M56 35V50L51 46Q42 57 30 55L32 46Q38 44 42 40L40 35Z" fill="#1f5cd6"/><circle cx="30" cy="30" r="15" fill="#d9d2bc" stroke="#9c957e"/><circle cx="30" cy="30" r="5" fill="#8c8c88"/><circle cx="29" cy="29" r="2.500" fill="#fff"/>',
  mremote: '<rect x="1" y="1" width="58" height="58" rx="9" fill="url(#gBlack)" stroke="#000" stroke-width="2"/><text x="5" y="42" font-size="27" font-weight="bold" fill="#2b5cf0" font-family="Liberation Sans">m</text><text x="27" y="42" font-size="37" font-weight="bold" fill="#dcdcdc" font-family="Liberation Sans">R</text>',
  sheep: '<circle cx="30" cy="30" r="30" fill="#f7a22c"/><circle cx="30" cy="31" r="25" fill="#fff"/><path d="M1 16L16 17L20 24L8 27ZM59 16L44 17L40 24L52 27Z" fill="#f08c1e" stroke="#3b2a1a" stroke-width="1.500"/><path d="M18 22Q30 16 42 22Q40 32 46 40Q44 54 30 54Q16 54 14 40Q20 32 18 22Z" fill="#f49b28" stroke="#3b2a1a" stroke-width="1.500"/><path d="M17 20Q12 11 20 10Q21 2 29 5Q35 1 39 8Q49 9 44 20Q38 25 34 20Q28 26 24 20Q19 24 17 20Z" fill="#fff" stroke="#3b2a1a" stroke-width="1.500"/><path d="M21 26L28 30L22 31M39 26L32 30L38 31M26 34Q30 37 34 34" stroke="#3b2a1a" stroke-width="1.500" fill="none"/><path d="M16 38Q30 46 44 38Q41 49 30 49Q19 49 16 38Z" fill="#fff" stroke="#3b2a1a" stroke-width="1.500"/>',
  t32: '<path d="M27 4L5 42L22 54Z" fill="#f08a0c"/><path d="M29 4H33L50 40V55H22Z" fill="#04048c"/><path d="M27 4H31L25 55H20Z" fill="#5c80a4"/><path d="M50 9L54 20V44H46V20Z" fill="#fff"/><path d="M46 16H54V21H46ZM46 26H54V31H46ZM46 35H54V40H46Z" fill="#e0244c"/><path d="M46 40L41 48V55H60V48L54 40Z" fill="#f2f4fa"/><path d="M50 45L54 50L50 55L46 50Z" fill="#e87820"/>',
  edgefile: '<path d="M10 4H38L49 15V56H10Z" fill="url(#gPaper)" stroke="#9aa0a2"/><path d="M38 4V15H49Z" fill="#e4e6e7" stroke="#9aa0a2"/><g transform="translate(12 14) scale(.7)">' + edge + '</g>',
  ini: paper + '<g transform="translate(0 26) scale(1.450 1.650)" fill="#c3cdd2" stroke="#9aa5aa" stroke-width=".4"><use href="#gear"/></g>',
  steth: '<path d="M.5.500H59.500V59.500H.5Z" fill="none" stroke="#37514a"/><path d="M30 15Q28 25 36 25Q45 26 54 20Q59 14 52 8L47 2Q38 4 30 15Z" fill="none" stroke="#b9bec0" stroke-width="1.800"/><path d="M30 15L12 28Q3 36 4 46M36 25Q22 24 14 29Q8 36 10 43M54 12L50 6" fill="none" stroke="#0e5f7e" stroke-width="2.800"/><path d="M44 39Q34 50 20 56" stroke="#0e5f7e" stroke-width="3.500" fill="none"/><circle cx="45" cy="38" r="3" fill="none" stroke="#c5cacb" stroke-width="1.500"/>',
  obs: '<circle cx="30" cy="30" r="27.500" fill="#f6f6f6"/><circle cx="30" cy="30" r="25" fill="url(#gObs)"/><g fill="none" stroke="#d9d7d9" stroke-width="2.800"><path d="M30 28Q12 20 19 8M30 28Q42 14 53 31M30 28Q34 47 19 48"/></g>',
  vnc: '<rect x="3" y="2" width="55" height="55" rx="4" fill="url(#gPaper)" stroke="#b9bcbe"/><path d="M4 9H12L19 36L27 9H34L24 49H15Z" fill="#fb2c2c"/><path d="M41 28V19Q41 12 48 12Q54 12 54 19V28" fill="none" stroke="#0aa312" stroke-width="6"/><path d="M56 33H47Q41 33 41 40Q41 47 47 47H56" fill="none" stroke="#0a44f4" stroke-width="6"/>',
  youdao: '<rect x="0" y="0" width="60" height="60" rx="11" fill="#e42119"/><text x="30" y="40" text-anchor="middle" font-size="26" font-weight="bold" fill="#fff" font-family="Noto Sans CJK SC">有道</text>',
  inkscape: '<path d="M30 4Q34 4 38 9L54 25Q58 31 46 33L42 39Q46 43 36 46L38 50Q34 54 30 51L28 46Q16 40 20 34Q2 32 5 26L24 8Q27 4 30 4Z" fill="url(#gInk)" stroke="#111" stroke-width="1.500"/><path d="M30 5Q34 6 42 14L37 18L34 15L29 20L25 14L17 18Z" fill="#eef1f5"/><path d="M24 35L42 33" stroke="#aab4c8" stroke-width="1.500"/><ellipse cx="51" cy="40" rx="5" ry="2" fill="#14161c"/><ellipse cx="48" cy="44" rx="2" ry="1.200" fill="#14161c"/>',
  foxit: '<path d="M0 0H45V15H60V60H0Z" fill="#f68b1e"/><path d="M48 0L60 12H48Z" fill="#f68b1e"/><path d="M3 36L32 5L56 27L26 56Z" fill="#f9a449" opacity=".7"/><path d="M41 13Q24 4 15 22Q12 38 24 41Q38 44 42 28L38 31L40 23L35 27Q36 17 41 13ZM34 30Q32 37 26 36Q19 33 22 24Q26 15 34 16Q31 22 34 30Z" fill="#fff" fill-rule="evenodd"/>',
  foxitpdf: '<text x="18" y="55" font-size="12" font-weight="bold" fill="#fff" font-family="Liberation Sans">PDF</text>',
  paintnet: '<path d="M2 2H47V58H2Z" fill="#f2f2f0" stroke="#33383a"/><path d="M5 5H43V47H5Z" fill="url(#gSky)"/><path d="M6 22Q14 8 22 16Q28 8 36 12Q34 20 26 20Q18 28 6 26Z" fill="#e8f3fc" opacity=".6"/><path d="M56 18L24 46L18 54L27 50L57 20Z" fill="#c8141c" stroke="#5c0a0e" stroke-width=".8"/><path d="M24 44L28 48L18 55Z" fill="#a9a9a4"/>',
  tshell: '<path d="M10 9H57Q59 9 58 12L51 49Q50 51 48 51H2Q0 51 1 48L7 11Q8 9 10 9Z" fill="url(#gPs)"/><path d="M21 15L35 29L16 43" fill="none" stroke="#fff" stroke-width="4.500" stroke-linecap="round"/><path d="M30 43H40" stroke="#fff" stroke-width="4.500" stroke-linecap="round"/>',
  shot2: '<path d="M2 9H56V56H2Z" fill="#f8f9f9"/><path d="M2 14H56V16H2Z" fill="#c9d6e2"/><path d="M5 18H10M14 18H38M5 22H30M12 26H15M12 30H15M5 34H24M14 37H32M18 42H28M18 48H38M5 52H40" stroke="#9aa" stroke-dasharray="3 1"/><path d="M32 30H55V43H32Z" fill="#fdfdfd" stroke="#ccd"/><circle cx="35" cy="36" r="1.500" fill="#f0c020"/>',
  ptu: '<circle cx="30" cy="30" r="29" fill="#0d70c4" stroke="#fff" stroke-width="1.500"/><g fill="none" stroke="#fff" stroke-width="6"><path d="M11 27Q15 12 30 12Q39 12 44 19"/><path d="M49 33Q45 48 30 48Q21 48 16 41"/></g><path d="M50 11V27H34ZM10 49V34H26Z" fill="#fff"/>',
  wpcups: '<path d="M4 10H56V49H4Z" fill="#fbfbfb"/><path d="M4 10H56V12H4Z" fill="#777"/><path d="M4 12H14V49H4Z" fill="#e6e8ea"/><path d="M15 16H38V46H15Z" fill="#0f7ad6"/><path d="M6 18H11M6 22H11M6 26H11M6 30H11" stroke="#999"/><path d="M40 17H54M40 20H54M40 23H54M40 26H54M40 29H54M40 32H54M40 35H48" stroke="#8b8f92"/>',
  python: '<path d="M4 10H56V49H4Z" fill="#f8f9f9"/><path d="M4 10H56V12H4Z" fill="#888"/><g fill="#c6cdd3"><g transform="translate(14 15)"><use href="#gear"/></g><g transform="translate(31 30) scale(.75)"><use href="#gear"/></g></g>',
  shot3: '<path d="M2 27H56V56H2Z" fill="#a9c3e6"/><path d="M4 30H24M4 34H26M4 38H26M4 42H25M4 46H26M4 50H25M30 30H52M30 33H54M30 36H50M30 39H54M30 42H48M30 45H54M30 48H52" stroke="#8a9fc0"/><path d="M27 28V55" stroke="#d2d8a4"/>',
  chrome: '<path d="M6.900 15A27.500 27.500 0 0 1 54.500 17.500H30L19.200 36.200Z" fill="#dd5044"/><path d="M6.900 15L19.200 36.200H40.800L28.600 57.500A27.500 27.500 0 0 1 6.900 15Z" fill="#1ea362"/><path d="M54.500 17.500H30L40.800 36.200L28.600 57.500A27.500 27.500 0 0 0 54.500 17.500Z" fill="#ffce41"/><circle cx="30" cy="30" r="12.500" fill="#f5f5f5"/><circle cx="30" cy="30" r="10" fill="#4a8af4"/>',
  explorer: '<path d="M3 8H22L26 14H57V52H3Z" fill="#f5cf6c"/><path d="M3 18H57V52H3Z" fill="#fde08f"/><path d="M12 56V36Q12 33 15 33H47Q50 33 50 36V56H40V45H22V56Z" fill="#3fb1e8"/>',
  ie: '<circle cx="31" cy="33" r="19" fill="none" stroke="#4fc4f2" stroke-width="10"/><path d="M14 34H50" stroke="#4fc4f2" stroke-width="8"/><path d="M36 38H60V48H36Z" fill="#0c100f"/><path d="M8 56Q-4 54 14 30Q36 4 54 6Q60 8 54 20" fill="none" stroke="#fcc83a" stroke-width="5"/>',
  outlook: '<path d="M26 14H60V46H26Z" fill="#fff"/><path d="M36 26L43 35L56 20" fill="none" stroke="#0a6cc0" stroke-width="6"/><path d="M0 6L36 0V60L0 54Z" fill="#0a6cc0"/><ellipse cx="18" cy="30" rx="8" ry="10" fill="none" stroke="#fff" stroke-width="5"/>',
  download: '<path d="M26 8H34V26H46L30 42L14 26H26Z" fill="#16e010"/><path d="M2 46Q30 36 58 46L52 56Q30 46 8 56Z" fill="#2a2a2a"/><path d="M4 48L8 56M14 50L17 58M26 50V58M38 50L36 58M48 50L46 57M57 47L53 55" stroke="#bbb" stroke-width="2"/>',
  notepad: '<path d="M4 6H50V58H4Z" fill="#e4f0dc"/><path d="M4 6H50V14H4Z" fill="#d0d4d0"/><path d="M8 38Q26 28 46 42V56H8Z" fill="#7ed03c"/><path d="M14 20V32M20 22V34M26 24V32M34 24V30" stroke="#333" stroke-width="3"/><path d="M56 4L34 42" stroke="#e8a020" stroke-width="6"/>',
  globe: '<circle cx="29" cy="34" r="25" fill="#6fb4ec"/><path d="M6 28Q20 16 46 20Q48 30 28 36Q16 36 6 28Z" fill="#eef7fd"/><path d="M14 52Q30 40 52 42Q44 58 29 58Z" fill="#cfe8fa"/><path d="M50 0L34 34" stroke="#c46a4a" stroke-width="4"/>',
  skype: '<circle cx="20" cy="20" r="20" fill="#1ab0ee"/><circle cx="40" cy="40" r="20" fill="#1ab0ee"/><circle cx="30" cy="30" r="24" fill="#1ab0ee"/><path d="M42 20Q36 12 26 16Q18 22 26 27L36 31Q42 37 35 43Q24 47 18 38" fill="none" stroke="#fff" stroke-width="7" stroke-linecap="round"/>',
  magnifier: '<path d="M30 0H60V30H50Z" fill="#000"/><circle cx="22" cy="24" r="17" fill="#8a9088" stroke="#f2e60e" stroke-width="7"/><path d="M14 32L30 14M20 36L34 20" stroke="#e8eee8" stroke-width="3"/><path d="M34 38L44 46" stroke="#e8dc10" stroke-width="7"/><path d="M44 46L58 60" stroke="#0a14c0" stroke-width="9"/>',
  visio: '<path d="M16 2H54V44H60V58H16Z" fill="#c9dcf4"/><path d="M2 6L44 0V52L2 44Z" fill="#3a68bc"/><path d="M8 10L20 40L36 8" fill="none" stroke="#fff" stroke-width="7"/><path d="M34 30H50V42H34ZM42 42L56 38V54H40Z" fill="#eaf2fd" stroke="#2450a0" stroke-width="2"/>',
  onenote: '<path d="M36 9H54V51H36Z" fill="#fff" stroke="#80397b" stroke-width="3"/><path d="M42 20H50M42 30H50M42 40H50" stroke="#80397b" stroke-width="3"/><path d="M54 8H59V18H54ZM54 23H59V35H54ZM54 40H59V50H54Z" fill="#80397b"/><path d="M2 6L38 0V60L2 54Z" fill="#80397b"/><path d="M12 42V18L28 42V18" fill="none" stroke="#fff" stroke-width="5"/>',
  docfind: '<path d="M10 2H42L54 14V58H10Z" fill="#f4f4f2"/><circle cx="33" cy="27" r="13" fill="#fff4e0" stroke="#f0941c" stroke-width="6"/><path d="M23 38L6 54" stroke="#d8540c" stroke-width="7"/>',
  settings: '<g transform="translate(8 8) scale(2.200)"><path fill="none" stroke="#fff" stroke-width="2.600" d="M10 3.500a6.500 6.500 0 1 0 0 13a6.500 6.500 0 1 0 0-13M10 0V3M10 17V20M0 10H3M17 10H20M3 3L5 5M15 15L17 17M3 17L5 15M15 5L17 3"/></g>',
  usb: '<path d="M22 2H44V38H22Z" fill="#9ea3a3" stroke="#e0e2e2" stroke-width="2"/><path d="M6 34H52V60H6Z" fill="#d6d8d8"/><path d="M14 42H22V50H14ZM36 42H44V50H36Z" fill="#222"/><circle cx="38" cy="14" r="2.500" fill="#1e8a30"/>',
  clapper: '<path d="M6 24H58V60H6Z" fill="#fff"/><path d="M4 10L54 0V10L4 18Z" fill="#fff"/><path d="M16 6L22 16M28 4L34 14M40 2L46 12" stroke="#0c100f" stroke-width="4"/>',
  memo: '<path d="M6 10H52V54H6Z" fill="#f6f6f4" stroke="#333" stroke-width="3"/><path d="M6 8H52" stroke="#fff" stroke-width="5" stroke-dasharray="3 3"/><path d="M14 24V36M14 30H24M24 24V36M32 24V36" stroke="#222" stroke-width="4"/><path d="M56 8L40 44" stroke="#d8242c" stroke-width="7"/><path d="M6 48H44" stroke="#999" stroke-width="3"/>'
};

/* label, art key, overlay: s = shortcut arrow, t = sync tick */
const desktop = [
  ['Recycle Bin','bin',''],['livemgr','folder','t'],['FSC.exe','fsc','t'],['RED2.exe','coffee','t'],['SREngLdr.EXE','sreng','t'],['sscom.ini','ini','t'],['touchwho','page','t'],['muswt719.r...','rdp','t'],
  ['shsm007.RDP','rdp','t'],['.screenrc','page','t'],['Adobe\nReader XI','adobe','s'],['AnyConnect\nHealth Che...','anyconnect','s'],['Beyond\nCompare 3','beyond','s'],['CrashInspect\n3.0.0.0','steth','s'],['Foxit Reader','foxit','s'],['Google\nChrome','chrome','s'],
  ['Intel\nAddAPrinter','printer','s'],['Intel Security\nChecker','keyhole','s'],['Intel\nSoftwa...','sm','s'],['ION Sessions\nManager','xming','s'],['mRemoteNG','mremote','s'],['OBS Studio','obs','s'],['paint.net','paintnet','s'],['PTU','ptu','s'],
  ['ScreenHunter\n5.1 Free','hunter','s'],['STT','stt','s'],['Teledyne\nLeCroy Tel...','teledyne','s'],['UltraEdit','ultraedit','s'],['Virtual\nCloneDrive','sheep','s'],['VNC Viewer','vnc','s'],['Windows\nTShell','tshell','s'],['WPCups','wpcups','s'],
  ['blender','blender','s'],['FreeComm...\nXE','compass','s'],['IT Virtual\nAssistan...','itva','s'],['Pledge','mcafee','s'],['t32start','t32','s'],['有道词典','youdao','s'],['dmesg.txt','text','t'],['python_http...','python','t'],
  ['ScreenHunt...\nMay. 05 12....','thin','t'],['0000_disabl...','page','t'],['Application\nMigration','appmig','s'],['env.txt','text','t'],['lighting.htm','edgefile','t'],['Inkscape','inkscape','s'],['ScreenHunt...\nMay. 11 16....','shot2','t'],['ScreenHunt...\nMay. 17 10....','shot3','t'],
  ['ScreenHunt...\nMay. 17 13....','shot1','t']
];
const overlay = { s: '<use href="#shortcut"/>', t: '<use href="#tick"/>', '': '' };
document.getElementById('icons').innerHTML = desktop.map(([label, key, o]) => `
  <li class="relative flex flex-col items-center pt-[7px] pr-px text-sm leading-5 text-white text-center whitespace-pre [text-shadow:1px_1px_2px_rgba(0,0,0,1),0_1px_1px_rgba(0,0,0,.6)]"><svg class="size-[60px] shrink-0 mb-1 overflow-visible" viewBox="0 0 60 60">${art[key]}${key === 'foxit' ? art.foxitpdf : ''}${overlay[o]}</svg>${key === 'obs' ? '<input type="checkbox" checked aria-label="Select OBS Studio" class="absolute left-[17px] top-[7px] size-4 appearance-none bg-white border border-[#333]"><svg class="absolute left-[19px] top-[9px] size-3 pointer-events-none" viewBox="0 0 12 12"><path d="M1 6L4.500 9.500L11 2.500" fill="none" stroke="#222" stroke-width="1.300"/></svg>' : ''}<span>${label}</span></li>`).join('');

/* name, art key, window state: 0 none, 1 open, 2 several windows, 3 active */
const tasks = [['File Explorer','explorer',2],['Internet Explorer','ie',0],['FreeCommander','compass',1],['Chrome','chrome',1],['Outlook','outlook',1],['Downloader','download',1],['Editor','notepad',1],['mRemoteNG','mremote',1],['Browser','globe',1],['Skype','skype',2],['有道','youdao',1],['Search tool','magnifier',1],['Foxit','foxit',1],['Visio','visio',1],['OneNote','onenote',1],['Document search','docfind',1],['Settings','settings',1],['USB','usb',1],['Movies','clapper',1],['Memo','memo',1],['OBS','obs',3]];
const bar = ['', '<span class="w-[35px] h-[3px] bg-[#9fd3f7]"></span>', '<span class="flex w-[35px] h-[3px] bg-[#7ba3bf]"><span class="w-6 bg-[#9fd3f7]"></span></span>', '<span class="w-full h-[3px] bg-[#9fd3f7]"></span>'];
document.getElementById('tasks').innerHTML = tasks.map(([n, key, s]) => `
  <button aria-label="${n}" class="flex flex-col items-center justify-between w-[45px] pt-[9px] ${s === 3 ? 'bg-[#3f4241]' : ''}"><svg class="size-5" viewBox="0 0 60 60">${art[key]}</svg>${bar[s]}</button>`).join('');

const clocks = [['MUC','7:54','AM','w-[89px]'],['IND','11:24','AM','w-[97px]'],['LAX','10:54','PM','w-[96px]'],['Me','1:54','PM','w-[81px]'],['LD','6:54','AM','w-[80px]']];
document.getElementById('clocks').innerHTML = clocks.map(([c, t, m, w], i) => `
  <div class="${w} flex justify-between items-center px-1 ${i % 2 ? 'bg-[#1272bf]' : 'bg-[#0f45e2]'}"><span class="text-[11px]">${c}</span><span class="font-['Liberation_Sans',sans-serif] font-bold text-lg leading-5">${t}</span><span class="text-[10px]">${m}</span></div>`).join('');
</script>
</body>
</html>
